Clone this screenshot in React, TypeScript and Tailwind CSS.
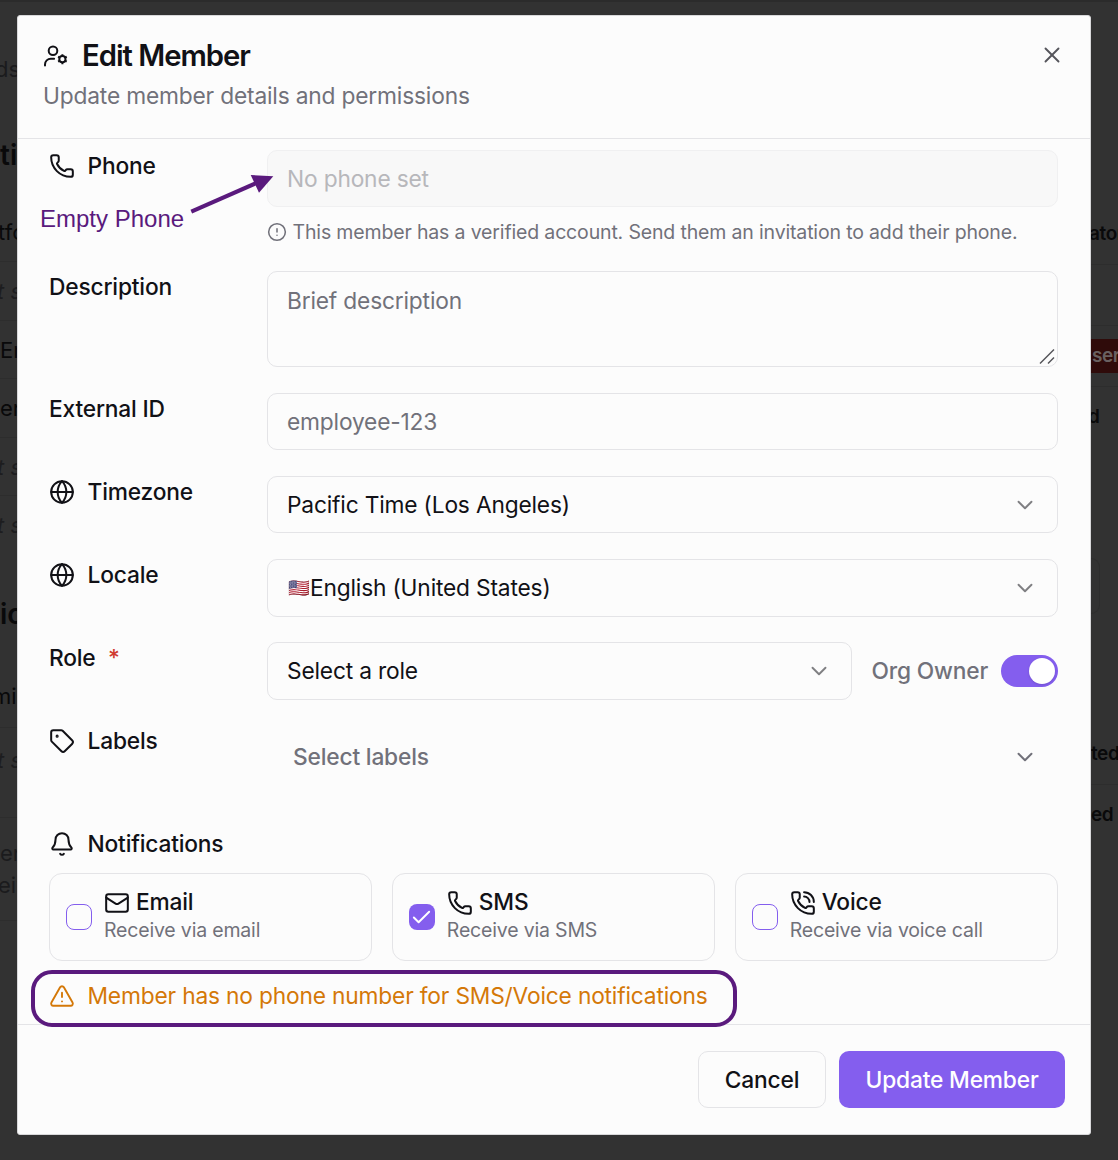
import React from 'react';
import { AlertTriangle, Bell, Check, ChevronDown, CircleAlert, Globe, Mail, Phone, PhoneCall, Tag, X } from 'lucide-react';

const UserCogIcon: React.FC = () => (
  <svg width="26" height="26" viewBox="0 0 26 26" fill="none" stroke="currentColor" strokeWidth="2" strokeLinecap="round">
    <circle cx="10" cy="7.7" r="4.3" />
    <path d="M2 22.6v-1.1a5.8 5.8 0 0 1 5.8-5.8h3.3" />
    <circle cx="19.4" cy="16.2" r="3.1" />
    <path
      d="M19.4 12.9v-1.7M19.4 21.2v-1.7M16.6 14.6l-1.5-.9M23.7 18.7l-1.5-.9M16.6 17.8l-1.5.9M23.7 13.7l-1.5.9"
      strokeLinecap="butt"
    />
  </svg>
);

type RowProps = {
  icon?: React.ReactNode;
  label: string;
  required?: boolean;
  className?: string;
  children: React.ReactNode;
};

const Row: React.FC<RowProps> = ({ icon, label, required, className, children }) => (
  <div className={`flex items-start ${className ?? ''}`}>
    <div className="flex h-8 w-[218px] shrink-0 items-center gap-[12.5px] font-medium">
      {icon}
      <span>{label}</span>
      {required && <span className="text-[#d03a2f]">*</span>}
    </div>
    <div className="min-w-0 flex-1">{children}</div>
  </div>
);

const Select: React.FC<{ className?: string; children: React.ReactNode }> = ({ className = 'h-[57px]', children }) => (
  <button className={`flex w-full items-center justify-between rounded-[10px] border border-[#e4e4e7] px-[19px] ${className}`}>
    <span className="flex items-center">{children}</span>
    <ChevronDown size={26} strokeWidth={1.75} className="text-[#7f7f82]" />
  </button>
);

const channels = [
  { icon: <Mail size={26} strokeWidth={1.85} />, title: 'Email', desc: 'Receive via email', checked: false },
  { icon: <Phone size={26} strokeWidth={1.85} />, title: 'SMS', desc: 'Receive via SMS', checked: true },
  { icon: <PhoneCall size={26} strokeWidth={1.85} />, title: 'Voice', desc: 'Receive via voice call', checked: false },
];

// Slices of the page that stay visible on either side of the dialog
const leftRows = [
  { text: 'tfo', className: 'h-[58px] -ml-0.5' },
  { text: 't se', className: 'h-[58px] italic text-[#1d1d1f] -ml-[3px]' },
  { text: 'En', className: 'h-[57px]' },
  { text: 'er', className: 'h-[58px]' },
  { text: 't se', className: 'h-[57px] italic text-[#1d1d1f] -ml-[3px]' },
];

const Backdrop: React.FC = () => (
  <div className="absolute inset-0 flex justify-between overflow-hidden border-t-2 border-[#2b2b2b] text-[22px] leading-8 whitespace-nowrap text-[#09090a]">
    <div className="flex w-[17px] flex-col overflow-hidden">
      <div className="mt-[51px] -ml-[5px] text-[#1b1b1d]">ds</div>
      <div className="mt-[54px] text-[28px] font-semibold">tin</div>
      <div className="mt-[32px] flex flex-col">
        {leftRows.map((r, i) => (
          <div key={i} className="border-b border-[#2d2d2d]">
            <div className={`flex items-center ${r.className}`}>{r.text}</div>
          </div>
        ))}
      </div>
      <div className="mt-[13px] -ml-[3px] text-[#1d1d1f] italic">t se</div>
      <div className="mt-[57px] text-[28px] font-semibold">ic</div>
      <div className="mt-[50px] -ml-[8px]">min</div>
      <div className="mt-[15px] border-t border-[#2d2d2d] pt-[16px]">
        <div className="-ml-[3px] text-[#1d1d1f] italic">t se</div>
      </div>
      <div className="mt-[41px] border-y border-[#2d2d2d] pt-[19px] pb-[19px] text-[#1b1b1d]">
        <div>er</div>
        <div className="-ml-0.5">eiv</div>
      </div>
    </div>
    <div className="flex w-[27px] flex-col overflow-hidden text-[19px] font-semibold tracking-[-0.4px]">
      <div className="mt-[216px] border-b border-[#2d2d2d] pb-[14px]">
        <div className="-ml-0.5">ator</div>
      </div>
      <div className="mt-[60px] border-t border-[#2d2d2d] pt-[13px]">
        <div className="flex h-[34px] items-center bg-[#2f0b0a] pl-px text-[#696060]">ser</div>
      </div>
      <div className="mt-[13px] border-t border-[#2d2d2d] pt-[14px]">
        <div className="-ml-[3px]">d</div>
      </div>
      <div className="mt-[125px] h-[56px] w-[9px] rounded-r-[10px] border border-l-0 border-[#2d2d2d]" />
      <div className="mt-[124px] border-b border-[#2d2d2d] pb-[14px]">ted</div>
      <div className="mt-[14px]">ed</div>
    </div>
  </div>
);

const App: React.FC = () => {
  return (
    <div className="relative h-[1160px] w-[1118px] overflow-hidden bg-[#323232] pt-[15px] pl-[17px] font-['Inter',sans-serif] text-[22.75px] leading-8 text-[#111116]">
      <Backdrop />

      <div className="relative flex h-[1120px] w-[1074px] flex-col rounded-[3px] border border-[#d8d8da] bg-[#fcfcfc] tracking-[-0.18px]">
        <header className="flex h-[123px] shrink-0 items-start justify-between border-b border-[#e4e4e7] pt-[22px] pr-[25px] pl-[25px]">
          <div>
            <div className="flex items-center gap-[13px]">
              <UserCogIcon />
              <h2 className="text-[29.25px] leading-9 font-semibold tracking-[-1.02px]">Edit Member</h2>
            </div>
            <p className="mt-1.5 text-[#71717a]">Update member details and permissions</p>
          </div>
          <X size={26} strokeWidth={1.75} className="mt-1 text-[#55555b]" />
        </header>

        <main className="flex h-[886px] shrink-0 flex-col border-b border-[#e4e4e7] pt-[11px] pr-8 pl-[31px]">
          <Row icon={<Phone size={26} strokeWidth={1.85} />} label="Phone" className="h-[121px]">
            <div className="flex h-[57px] items-center rounded-[10px] border border-[#f0f0f1] bg-[#f8f8f8] px-[19px] text-[#b7b7bb]">
              No phone set
            </div>
            <div className="mt-[9px] flex items-center gap-[5.5px] text-[19.5px] tracking-[-0.155px] text-[#71717a]">
              <CircleAlert size={20} strokeWidth={1.85} />
              <span>This member has a verified account. Send them an invitation to add their phone.</span>
            </div>
          </Row>

          <Row label="Description" className="h-[122px]">
            <div className="flex h-24 items-start justify-between rounded-[10px] border border-[#e4e4e7] pt-[13px] pl-[19px] text-[#71717a]">
              <span>Brief description</span>
              <svg width="18" height="18" viewBox="0 0 18 18" stroke="#55555a" strokeWidth="1.5" className="self-end">
                <path d="M1 15.5L15 1.5M9 15.5L15 9.5" />
              </svg>
            </div>
          </Row>

          <Row label="External ID" className="h-[83px]">
            <div className="flex h-[57px] items-center rounded-[10px] border border-[#e4e4e7] px-[19px] text-[#71717a]">employee-123</div>
          </Row>

          <Row icon={<Globe size={26} strokeWidth={1.85} />} label="Timezone" className="h-[83px]">
            <Select>Pacific Time (Los Angeles)</Select>
          </Row>

          <Row icon={<Globe size={26} strokeWidth={1.85} />} label="Locale" className="h-[83px]">
            <Select className="h-[58px]">
              <span className="w-[23px] text-[17.5px]">🇺🇸</span>
              English (United States)
            </Select>
          </Row>

          <Row label="Role" required className="h-[83px]">
            <div className="flex items-center">
              <div className="w-[585px]">
                <Select className="h-[58px]">Select a role</Select>
              </div>
              <span className="ml-[19.5px] font-medium text-[#71717a]">Org Owner</span>
              <div className="ml-auto flex h-8 w-[57px] items-center justify-end rounded-full bg-[#845eee] pr-[3px]">
                <div className="size-[26px] rounded-full bg-white shadow" />
              </div>
            </div>
          </Row>

          <Row icon={<Tag size={26} strokeWidth={1.85} />} label="Labels" className="h-[103px]">
            <div className="flex h-[64px] items-center justify-between pr-[20px] pl-[26px] font-medium text-[#71717a]">
              <span>Select labels</span>
              <ChevronDown size={26} strokeWidth={1.85} />
            </div>
          </Row>

          <div className="flex h-8 items-center gap-[12.5px] font-medium">
            <Bell size={26} strokeWidth={1.85} />
            <span>Notifications</span>
          </div>

          <div className="mt-[13px] grid grid-cols-3 gap-[19.5px]">
            {channels.map((c) => (
              <div key={c.title} className="flex h-[88px] items-center rounded-[13px] border border-[#e4e4e7] pl-4">
                {c.checked ? (
                  <div className="flex size-[26px] items-center justify-center rounded-[8px] bg-[#845eee] text-white">
                    <Check size={23} strokeWidth={2} />
                  </div>
                ) : (
                  <div className="size-[26px] rounded-[8px] border border-[#845eee]" />
                )}
                <div className="ml-3 pb-0.5">
                  <div className="flex h-[29px] items-center gap-[6px] font-medium">
                    {c.icon}
                    <span className="-mt-0.5">{c.title}</span>
                  </div>
                  <div className="h-[27px] text-[19.5px] leading-[27px] text-[#71717a]">{c.desc}</div>
                </div>
              </div>
            ))}
          </div>

          <div className="mt-[19px] flex items-center gap-[12.5px] text-[#d47808]">
            <AlertTriangle size={26} strokeWidth={1.75} />
            <span>Member has no phone number for SMS/Voice notifications</span>
          </div>
        </main>

        <footer className="flex justify-end gap-[13px] pt-[26px] pr-[25px] font-medium">
          <button className="h-[57px] w-[128px] rounded-[10px] border border-[#e4e4e7]">Cancel</button>
          <button className="h-[57px] w-[226px] rounded-[10px] bg-[#845eee] text-white">Update Member</button>
        </footer>
      </div>

      {/* Callouts */}
      <div className="absolute top-[203px] left-[40px] font-['Liberation_Sans',sans-serif] text-[24px] text-[#5a1a7d]">Empty Phone</div>
      <svg className="absolute top-[170px] left-[186px]" width="92" height="48" viewBox="0 0 92 48">
        <path d="M5.3 41.6L70 13.2" stroke="#5a1a7d" strokeWidth="4" />
        <path d="M87.3 6.3L64.7 5L73 22.7Z" fill="#5a1a7d" />
      </svg>
      <div className="absolute top-[970px] left-[31px] h-[57px] w-[706px] rounded-[21px] border-4 border-[#5a1a7d]" />
    </div>
  );
};

export default App;
